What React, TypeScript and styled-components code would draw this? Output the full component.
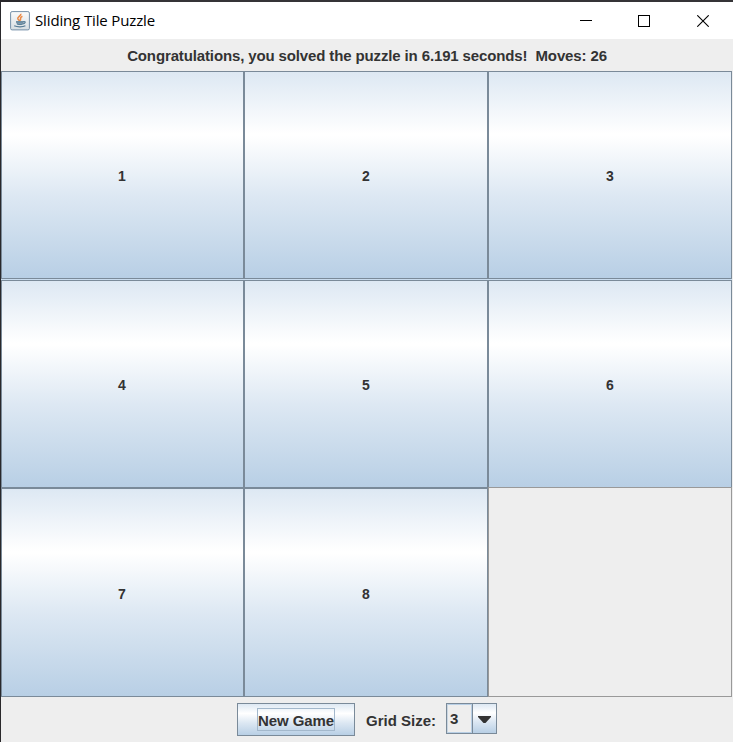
import React from "react";
import styled, { createGlobalStyle } from "styled-components";

const GlobalStyle = createGlobalStyle`
  * { box-sizing: border-box; }
  html, body { margin: 0; padding: 0; overflow: hidden; }
`;

const Desktop = styled.div`
  width: 733px;
  height: 742px;
  padding: 2px 0 0 1px;
  background: linear-gradient(90deg, #29282b 0 20px, #353437 20px);
`;

const Window = styled.main`
  display: flex;
  flex-direction: column;
  width: 732px;
  height: 740px;
  background: #eeeeee;
  color: #333333;
  font: bold 15px/18px "Liberation Sans", Arial, sans-serif;
`;

const TitleBar = styled.header`
  display: flex;
  align-items: center;
  flex: 0 0 37px;
  padding-left: 9px;
  background: #ffffff;
  color: #000000;
`;

const Title = styled.h1`
  flex: 1;
  margin: -2px 0 0 5px;
  font: normal 15px/20px "Segoe UI", "Open Sans", sans-serif;
  letter-spacing: -0.14px;
`;

const WindowButtons = styled.div`
  display: flex;
  padding-right: 1px;
`;

const WindowButton = styled.button`
  display: flex;
  align-items: center;
  justify-content: center;
  width: 58px;
  height: 37px;
  padding: 0;
  border: 0;
  background: transparent;
`;

const Status = styled.div`
  flex: 0 0 32px;
  padding-top: 8px;
  text-align: center;
  white-space: pre;
  letter-spacing: -0.13px;
`;

const Board = styled.section`
  display: grid;
  grid-template-columns: 243px 244px 244px;
  grid-template-rows: 208px 208px 209px;
  flex: 0 0 626px;
  width: 731px;
  background: linear-gradient(#c9dcee 0 300px, transparent 300px);
`;

const metal = "linear-gradient(#dde8f3 0%, #ffffff 30%, #ffffff 31%, #dde8f3 60%, #b8cfe5 100%)";

const Tile = styled.button<{ $gapAbove: boolean; $first: boolean }>`
  margin: ${(p) => (p.$gapAbove ? "1px 0 -1px" : "0")};
  padding: 2px ${(p) => (p.$first ? "1px" : "0")} 0 0;
  border: 1px solid #7a8a99;
  background: ${metal};
  color: inherit;
  font: inherit;
  font-size: 14px;
`;

const EmptyCell = styled.div`
  border: 1px solid #999999;
  height: 210px;
`;

const Controls = styled.footer`
  display: flex;
  align-items: flex-start;
  padding: 6px 0 0 236px;
`;

const NewGame = styled.button`
  width: 118px;
  height: 33px;
  padding: 0;
  display: flex;
  align-items: center;
  justify-content: center;
  border: 1px solid #7a8a99;
  background: ${metal};
  color: inherit;
  font: inherit;
`;

const FocusLabel = styled.span`
  width: 78px;
  height: 23px;
  padding-top: 3px;
  border: 1px solid #a3b8cc;
  white-space: nowrap;
  letter-spacing: -0.1px;
`;

const SizeLabel = styled.label`
  width: 80px;
  margin: 9px 0 0 11px;
`;

const Combo = styled.button`
  display: flex;
  width: 51px;
  height: 31px;
  padding: 0;
  border: 1px solid #7a8a99;
  background: #eeeeee;
  color: inherit;
  font: inherit;
`;

const ComboValue = styled.span`
  width: 25px;
  height: 29px;
  padding: 5px 0 0 2px;
  border: 1px solid #b8cfe5;
  border-left-color: #c9d6e2;
  text-align: left;
`;

const ComboArrow = styled.span`
  display: flex;
  align-items: center;
  justify-content: center;
  width: 24px;
  height: 29px;
  padding: 1px 1px 0 0;
  border-left: 1px solid #7a8a99;
  background: ${metal};
`;

function JavaIcon() {
  return (
    <svg width="20" height="20" viewBox="0 0 20 20" fill="none">
      <defs>
        <linearGradient id="plate" x1="0" y1="0" x2="0" y2="1">
          <stop stopColor="#fbfbfb" />
          <stop offset="1" stopColor="#d6dde2" />
        </linearGradient>
      </defs>
      <rect x=".6" y=".6" width="18.8" height="18.3" rx="1.5" fill="url(#plate)" stroke="#7590a8" />
      <path d="M10.8 2.8c.7 2.2-3.6 3.1-3 5 .3.8 1.5 1.3 1.6 2.3M12.4 5.2c-3.4 1.4-1.1 2.7-2.2 4.5" stroke="#ea8a48" strokeWidth="1.6" />
      <path d="M6 10.6h7.6c-.2 1.9-.8 3-1.8 3.5H8c-1.1-.5-1.8-1.7-2-3.5z" fill="#8aa5b6" />
      <path d="M6 10.8h7.6M7 12.7c1.5.6 4.4.6 5.8 0M13.5 10.6c2.6-.4 2 2-.5 2.3M4.2 14.8c3 1.4 8.6 1.4 11.2 0" stroke="#567b94" strokeWidth="1.2" />
    </svg>
  );
}

const tiles = [1, 2, 3, 4, 5, 6, 7, 8];

export default function App() {
  return (
    <>
      <GlobalStyle />
      <Desktop>
        <Window>
          <TitleBar>
            <JavaIcon />
            <Title>Sliding Tile Puzzle</Title>
            <WindowButtons>
              <WindowButton aria-label="Minimize">
                <svg width="14" height="12" shapeRendering="crispEdges"><path d="M0 5.5h12" stroke="#000" /></svg>
              </WindowButton>
              <WindowButton aria-label="Maximize">
                <svg width="14" height="12" shapeRendering="crispEdges"><path d="M.5.5h11v11H.5z" fill="none" stroke="#000" /></svg>
              </WindowButton>
              <WindowButton aria-label="Close">
                <svg width="12" height="12"><path d="m.3.3 11.4 11.4M11.7.3.3 11.7" stroke="#000" strokeWidth="1.1" /></svg>
              </WindowButton>
            </WindowButtons>
          </TitleBar>
          <Status>{"Congratulations, you solved the puzzle in 6.191 seconds!  Moves: 26"}</Status>
          <Board>
            {tiles.map((n) => (
              <Tile key={n} $gapAbove={n > 3} $first={n % 3 === 1}>{n}</Tile>
            ))}
            <EmptyCell />
          </Board>
          <Controls>
            <NewGame><FocusLabel>New Game</FocusLabel></NewGame>
            <SizeLabel>Grid Size:</SizeLabel>
            <Combo aria-label="Grid Size">
              <ComboValue>3</ComboValue>
              <ComboArrow>
                <svg width="13" height="7"><path d="M0 0h13v1L7.5 7h-2L0 1z" fill="#333" /></svg>
              </ComboArrow>
            </Combo>
          </Controls>
        </Window>
      </Desktop>
    </>
  );
}
